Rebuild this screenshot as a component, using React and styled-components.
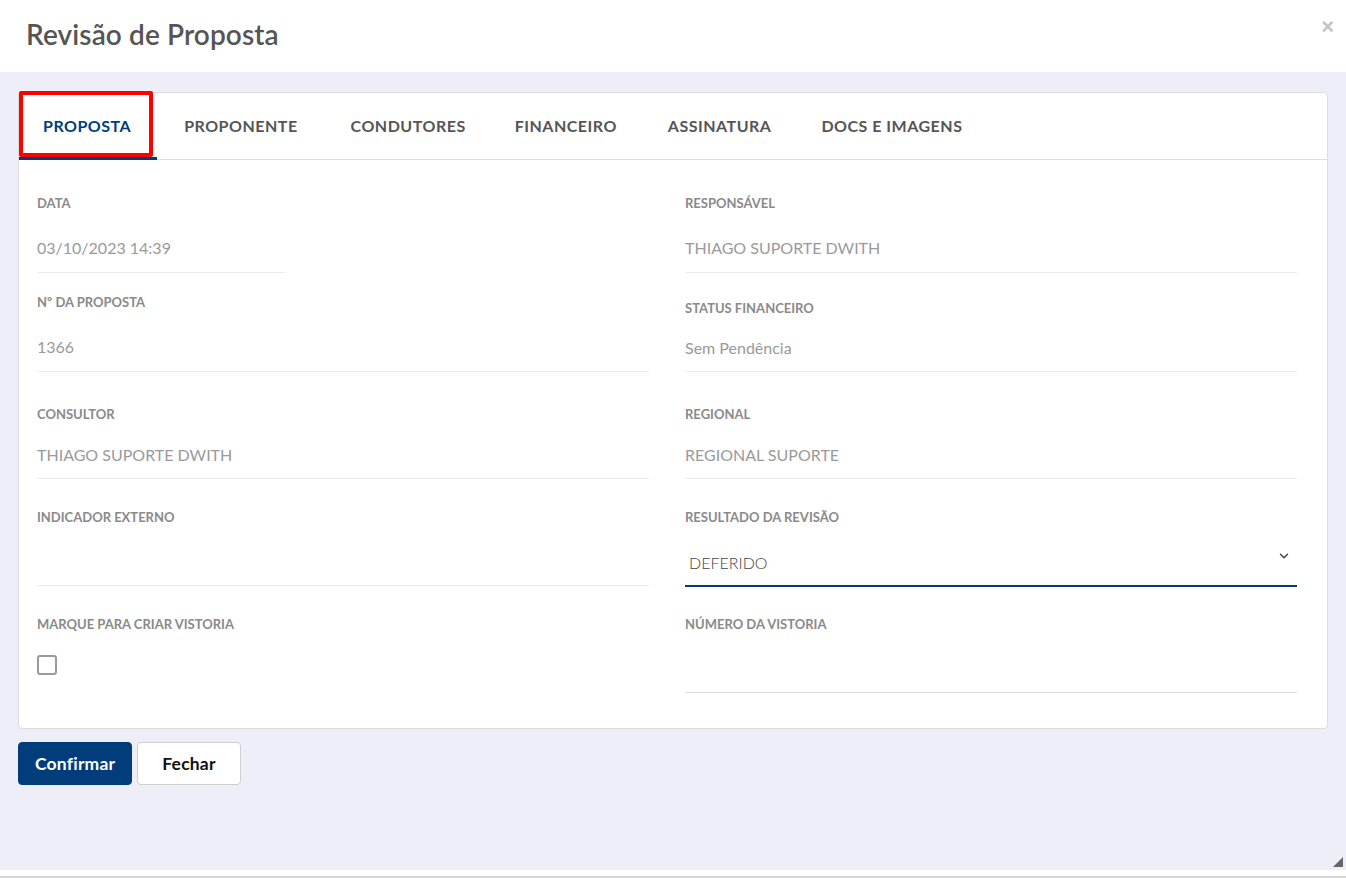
import React, { useState } from "react";
import styled, { createGlobalStyle } from "styled-components";

const GlobalStyle = createGlobalStyle`
  html, body { margin: 0; padding: 0; }
  body {
    font-family: "Lato", "Noto Sans", "Liberation Sans", sans-serif;
    background: #ffffff;
  }
  * { box-sizing: border-box; }
`;

const Modal = styled.div`
  width: 1346px;
  height: 878px;
  display: flex;
  flex-direction: column;
  background: #fff;
  border-bottom: 2px solid #d6d6d6;
  position: relative;
`;

const Header = styled.div`
  height: 72px;
  display: flex;
  align-items: center;
  justify-content: space-between;
  padding: 0 12px 0 26px;
`;

const Title = styled.h1`
  margin: 0 0 4px 0;
  font-size: 28px;
  font-weight: 600;
  color: #555;
  letter-spacing: 0.1px;
`;

const Close = styled.button`
  border: none;
  background: none;
  color: #c4c4c4;
  font-size: 22px;
  font-weight: 700;
  cursor: pointer;
  align-self: flex-start;
  margin-top: 14px;
  padding: 0;
`;

const Body = styled.div`
  flex: 1;
  background: #eeeef8;
  padding: 20px 18px 0 18px;
  margin-bottom: 6px;
`;

const Card = styled.div`
  background: #fff;
  border: 1px solid #dcdcdc;
  border-radius: 4px;
  height: 637px;
`;

const TabBar = styled.div`
  display: flex;
  height: 67px;
  border-bottom: 1px solid #dcdcdc;
`;

const Tab = styled.div`
  position: relative;
  display: flex;
  align-items: center;
  padding: 0 ${(p) => p.$pad}px 0 ${(p) => p.$padL}px;
  font-size: 16px;
  font-weight: 700;
  letter-spacing: 0.5px;
  color: ${(p) => (p.$active ? "#003d7a" : "#555")};
  border-bottom: ${(p) => (p.$active ? "3px solid #003d7a" : "3px solid transparent")};
  margin-bottom: -1px;
  cursor: pointer;
`;

const Highlight = styled.div`
  position: absolute;
  left: 0;
  top: -2px;
  width: 134px;
  height: 66px;
  border: 4px solid #ff0000;
  border-radius: 2px;
  pointer-events: none;
`;

const Grid = styled.div`
  display: grid;
  grid-template-columns: 612px 612px;
  column-gap: 36px;
  padding: 0 30px 0 18px;
`;

const Column = styled.div`
  display: flex;
  flex-direction: column;
`;

const Field = styled.div`
  margin-top: ${(p) => p.$top}px;
  display: flex;
  flex-direction: column;
`;

const Label = styled.div`
  font-size: 13px;
  font-weight: 700;
  color: #8a8a8a;
  line-height: 16px;
`;

const Value = styled.div`
  height: ${(p) => p.$h || 62}px;
  width: ${(p) => (p.$w ? `${p.$w}px` : "auto")};
  display: flex;
  align-items: center;
  font-size: 16px;
  color: #9a9a9a;
  border-bottom: 1px solid ${(p) => p.$line || "#ececec"};
  padding-top: ${(p) => p.$pt ?? 12}px;
`;

const Select = styled.div`
  height: 62px;
  display: flex;
  align-items: flex-end;
  padding: 0 6px 13px 4px;
  border-bottom: 2px solid #003d7a;
  font-size: 16px;
  font-weight: 300;
  color: #444;
  position: relative;
`;

const Chevron = styled.svg`
  position: absolute;
  right: 6px;
  top: 24px;
`;

const CheckRow = styled.div`
  height: 52px;
  display: flex;
  align-items: center;
  padding-top: 14px;
`;

const Check = styled.span`
  width: 20px;
  height: 20px;
  border: 2px solid #9a9a9a;
  border-radius: 3px;
  display: inline-block;
`;

const Actions = styled.div`
  display: flex;
  gap: 5px;
  margin-top: 13px;
`;

const Button = styled.button`
  height: 43px;
  padding: 0 ${(p) => (p.$primary ? 16 : 24)}px;
  border-radius: 4px;
  font-family: inherit;
  font-size: 17.5px;
  font-weight: 700;
  letter-spacing: 0.2px;
  cursor: pointer;
  background: ${(p) => (p.$primary ? "#003d7a" : "#fff")};
  color: ${(p) => (p.$primary ? "#fff" : "#111")};
  border: 1px solid ${(p) => (p.$primary ? "#003d7a" : "#cfcfcf")};
`;

const Grip = styled.svg`
  position: absolute;
  right: 2px;
  bottom: 8px;
`;

const tabs = [
  { name: "PROPOSTA", l: 24, r: 26 },
  { name: "PROPONENTE", l: 27, r: 27 },
  { name: "CONDUTORES", l: 26, r: 23 },
  { name: "FINANCEIRO", l: 26, r: 25 },
  { name: "ASSINATURA", l: 26, r: 24 },
  { name: "DOCS E IMAGENS", l: 26, r: 26 },
];

export default function App() {
  const [active, setActive] = useState("PROPOSTA");
  const [checked, setChecked] = useState(false);

  return (
    <>
      <GlobalStyle />
      <Modal>
        <Header>
          <Title>Revisão de Proposta</Title>
          <Close>×</Close>
        </Header>
        <Body>
          <Card>
            <TabBar>
              {tabs.map((t) => (
                <Tab
                  key={t.name}
                  $padL={t.l}
                  $pad={t.r}
                  $active={active === t.name}
                  onClick={() => setActive(t.name)}
                >
                  {t.name}
                  {t.name === "PROPOSTA" && <Highlight />}
                </Tab>
              ))}
            </TabBar>
            <Grid>
              <Column>
                <Field $top={35}>
                  <Label>DATA</Label>
                  <Value $w={248}>03/10/2023 14:39</Value>
                </Field>
                <Field $top={21}>
                  <Label>Nº DA PROPOSTA</Label>
                  <Value>1366</Value>
                </Field>
                <Field $top={34}>
                  <Label>CONSULTOR</Label>
                  <Value $h={57} $pt={8}>THIAGO SUPORTE DWITH</Value>
                </Field>
                <Field $top={30}>
                  <Label>INDICADOR EXTERNO</Label>
                  <Value $h={61} />
                </Field>
                <Field $top={30}>
                  <Label>MARQUE PARA CRIAR VISTORIA</Label>
                  <CheckRow onClick={() => setChecked(!checked)}>
                    <Check style={{ background: checked ? "#003d7a" : "#fff" }} />
                  </CheckRow>
                </Field>
              </Column>
              <Column>
                <Field $top={35}>
                  <Label>RESPONSÁVEL</Label>
                  <Value>THIAGO SUPORTE DWITH</Value>
                </Field>
                <Field $top={27}>
                  <Label>STATUS FINANCEIRO</Label>
                  <Value $h={56} $pt={8}>Sem Pendência</Value>
                </Field>
                <Field $top={34}>
                  <Label>REGIONAL</Label>
                  <Value $h={57} $pt={8}>REGIONAL SUPORTE</Value>
                </Field>
                <Field $top={30}>
                  <Label>RESULTADO DA REVISÃO</Label>
                  <Select>
                    DEFERIDO
                    <Chevron width="14" height="14" viewBox="0 0 24 24" fill="none" stroke="#444" strokeWidth="2.5" strokeLinecap="round" strokeLinejoin="round">
                      <path d="M6 9l6 6 6-6" />
                    </Chevron>
                  </Select>
                </Field>
                <Field $top={29}>
                  <Label>NÚMERO DA VISTORIA</Label>
                  <Value $h={61} $line="#dcdcdc" />
                </Field>
              </Column>
            </Grid>
          </Card>
          <Actions>
            <Button $primary>Confirmar</Button>
            <Button>Fechar</Button>
          </Actions>
        </Body>
        <Grip width="12" height="12" viewBox="0 0 12 12">
          <path d="M11 1 L11 11 L1 11 Z" fill="#666" />
        </Grip>
      </Modal>
    </>
  );
}
